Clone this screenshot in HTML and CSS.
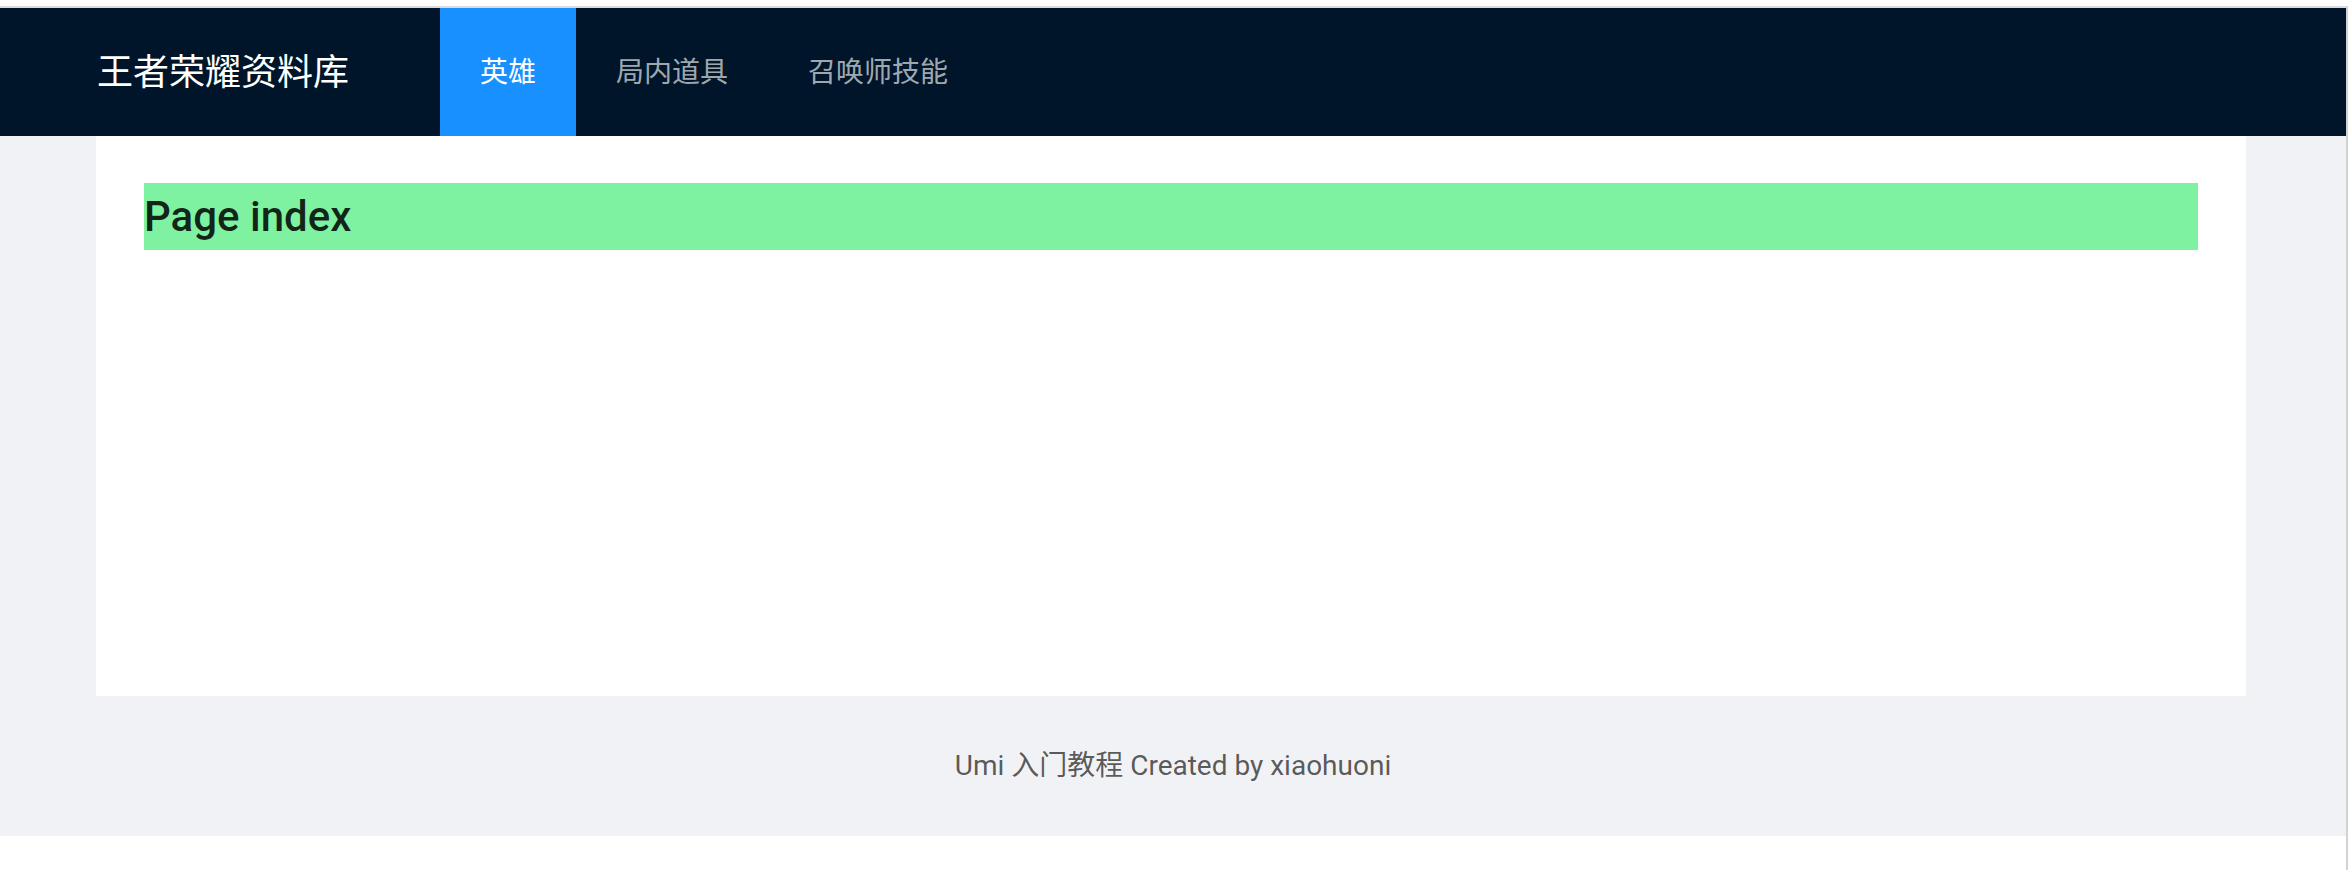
FILE: index.html
```html
<!DOCTYPE html>
<html lang="zh-CN">
<head>
    <meta charset="UTF-8">
    <meta name="viewport" content="width=device-width, initial-scale=1.0">
    <title>王者荣耀资料库</title>
    <link rel="stylesheet" href="styles.css">
</head>
<body>
    <div class="frame">
        <div class="layout">
            <header class="header">
                <div class="logo">王者荣耀资料库</div>
                <ul class="menu">
                    <li class="menu-item selected">英雄</li>
                    <li class="menu-item">局内道具</li>
                    <li class="menu-item">召唤师技能</li>
                </ul>
            </header>

            <main class="main">
                <div class="content">
                    <h1 class="title">Page index</h1>
                </div>
            </main>

            <footer class="footer">Umi 入门教程 Created by xiaohuoni</footer>
        </div>
    </div>
</body>
</html>
```

FILE: styles.css
```css
body {
    margin: 0;
    padding-top: 6px;
    background-color: #fff;
    font-family: Roboto, "Noto Sans CJK SC", sans-serif;
}

.frame {
    width: 2346px;
    min-height: 862px;
    border-top: 2px solid #dcdcdc;
    border-right: 2px solid #d2d2d2;
}

.layout {
    background-color: #f0f2f5;
}

.header {
    display: flex;
    align-items: center;
    height: 128px;
    padding: 0 100px 0 97px;
    background-color: #001529;
}

.logo {
    width: 343px;
    padding-bottom: 6px;
    color: #fff;
    font-family: "Noto Sans CJK SC", sans-serif;
    font-size: 36px;
    line-height: 122px;
}

.menu {
    display: flex;
    margin: 0;
    padding: 0;
    list-style: none;
}

.menu-item {
    padding: 0 40px 4px;
    color: rgba(255, 255, 255, 0.65);
    font-family: "Noto Sans CJK SC", sans-serif;
    font-size: 28px;
    line-height: 124px;
}

.menu-item.selected {
    color: #fff;
    background-color: #1890ff;
}

.main {
    padding: 0 100px 0 96px;
}

.content {
    height: 560px;
    box-sizing: border-box;
    padding: 47px 48px;
    background-color: #fff;
}

.title {
    margin: 0;
    background-color: #7ef2a0;
    color: rgba(0, 0, 0, 0.85);
    font-size: 42px;
    font-weight: 500;
    line-height: 67px;
}

.footer {
    padding: 48px 100px;
    color: rgba(0, 0, 0, 0.65);
    font-size: 28px;
    line-height: 44px;
    text-align: center;
}
```
